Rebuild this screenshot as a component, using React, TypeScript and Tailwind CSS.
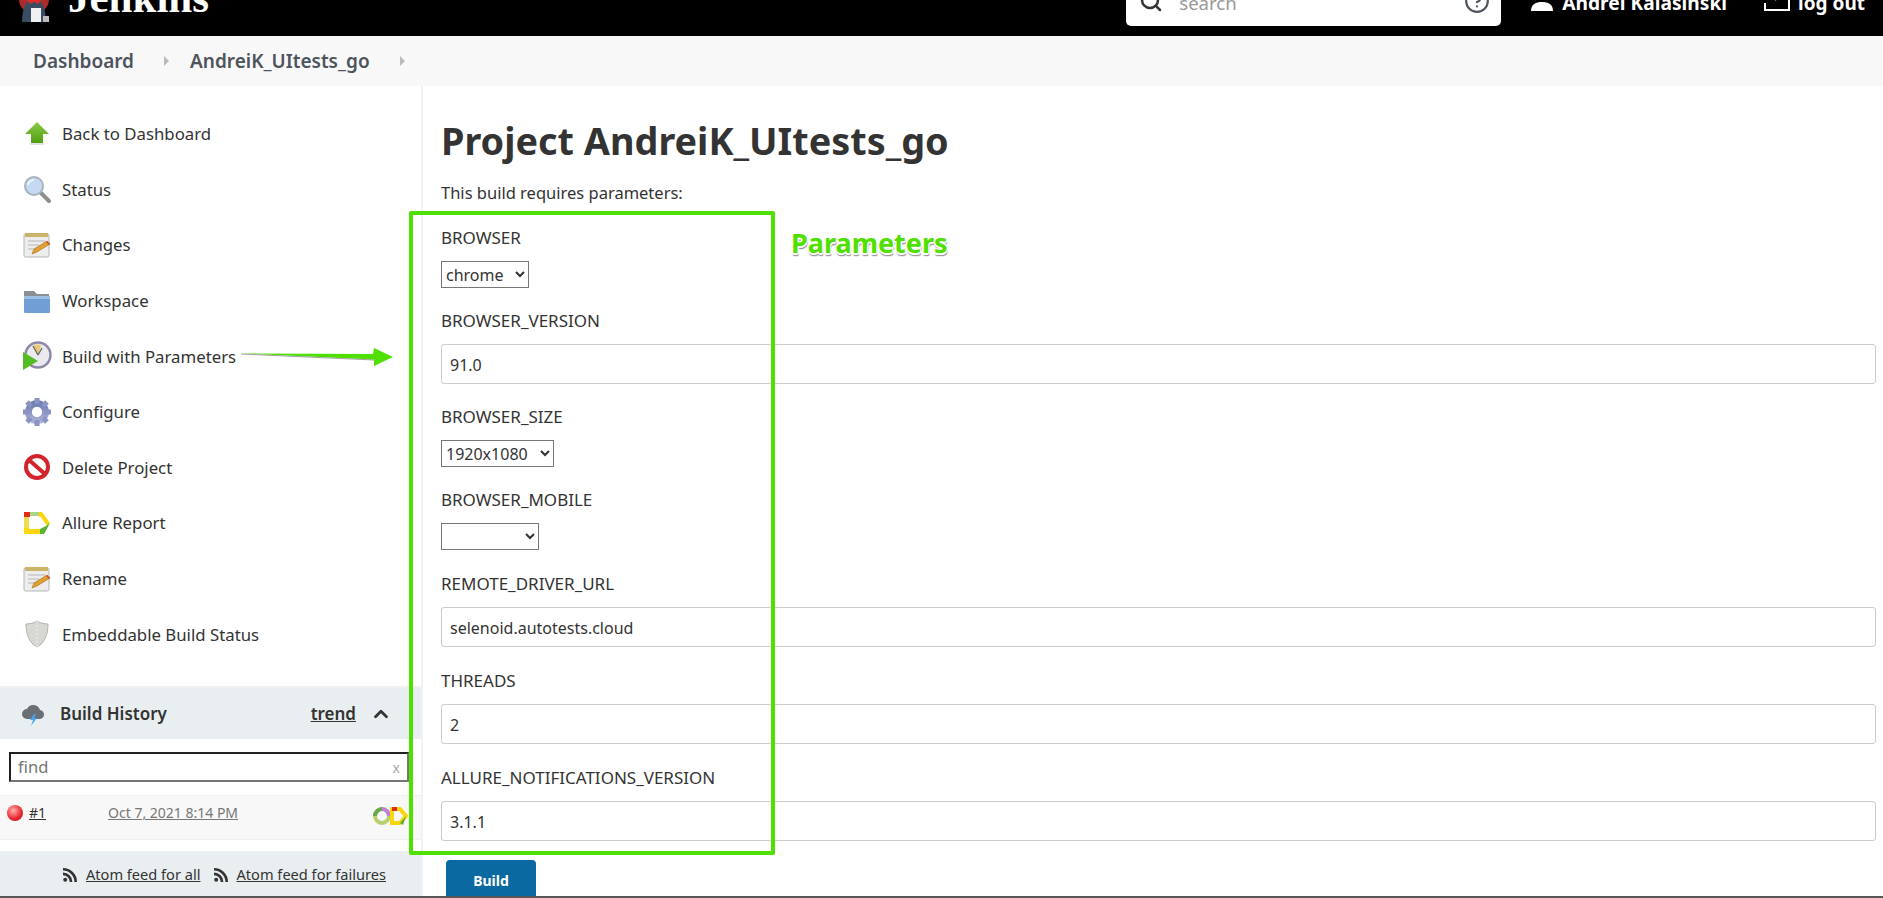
import { ChevronUp, CircleHelp, Search } from 'lucide-react';
import type { ReactNode } from 'react';

const font = { fontFamily: '"Noto Sans", sans-serif' };

function Notepad() {
  return (
    <svg viewBox="0 0 28 28" className="w-[28px] h-[28px]">
      <rect x="1" y="3" width="25" height="23" rx="1.5" fill="#ededed" stroke="#b5b5b5" />
      <rect x="2" y="2" width="23" height="4" fill="#c9b469" />
      <path d="M5 10h17M5 14h11M5 18h8" stroke="#b8b8b8" strokeWidth="1.2" />
      <path d="M9 23l2-5L24 10l3 3-13 8z" fill="#e0a030" stroke="#a86a18" strokeWidth="0.6" />
      <path d="M23 11l3 3 1-1-3-3z" fill="#d04a3a" />
    </svg>
  );
}

function Allure() {
  return (
    <svg viewBox="0 0 28 28" className="w-[28px] h-[28px]">
      <path d="M1 3h6v5H1z" fill="#e02a1c" />
      <path d="M7 3h9v4H7z" fill="#a8d48a" />
      <path d="M16 3h3l8 11-3 3-6-9h-2z" fill="#fbd60a" />
      <path d="M1 8h5v11H1z" fill="#f0dc50" />
      <path d="M1 19h5v4H1z" fill="#fbd60a" />
      <path d="M6 20h11v5H1v-2h5z" fill="#fbd60a" />
      <path d="M17 20l6-3 4-3-6 11h-4z" fill="#5cb030" />
    </svg>
  );
}

function AtomIcon() {
  return (
    <svg viewBox="0 0 14 14" className="w-[14px] h-[14px] shrink-0" fill="#333">
      <circle cx="2.2" cy="11.8" r="2" />
      <path d="M0 4.6v2.6a6.8 6.8 0 0 1 6.8 6.8h2.6A9.4 9.4 0 0 0 0 4.6z" />
      <path d="M0 0v2.6A11.4 11.4 0 0 1 11.4 14H14A14 14 0 0 0 0 0z" />
    </svg>
  );
}

const sideItems: { label: string; icon: ReactNode }[] = [
  {
    label: 'Back to Dashboard',
    icon: (
      <svg viewBox="0 0 28 28" className="w-[28px] h-[28px]">
        <defs>
          <linearGradient id="upArrow" x1="0" y1="0" x2="0" y2="1">
            <stop offset="0" stopColor="#8ccc48" />
            <stop offset="1" stopColor="#4e9e12" />
          </linearGradient>
        </defs>
        <path d="M14 2L26 14h-6v9H8v-9H2z" fill="url(#upArrow)" />
        <rect x="7" y="23" width="14" height="2" fill="#e3e3e3" />
      </svg>
    ),
  },
  {
    label: 'Status',
    icon: (
      <svg viewBox="0 0 28 28" className="w-[28px] h-[28px]">
        <path d="M18 18l8 8" stroke="#8f8f8f" strokeWidth="4" strokeLinecap="round" />
        <circle cx="11" cy="11" r="9" fill="#c5daf2" stroke="#a9b3bd" strokeWidth="2" />
        <path d="M5 10a6 6 0 0 1 6-5" stroke="#eef5fc" strokeWidth="2" fill="none" />
      </svg>
    ),
  },
  { label: 'Changes', icon: <Notepad /> },
  {
    label: 'Workspace',
    icon: (
      <svg viewBox="0 0 28 28" className="w-[28px] h-[28px]">
        <path d="M1 4h10l3 3h12v4H1z" fill="#8a8f96" />
        <rect x="1" y="9" width="26" height="17" rx="1" fill="#6f9fd4" />
        <rect x="1" y="9" width="26" height="3" fill="#9cbfe4" />
      </svg>
    ),
  },
  {
    label: 'Build with Parameters',
    icon: (
      <svg viewBox="0 0 30 30" className="w-[30px] h-[30px]">
        <circle cx="16" cy="14" r="12.5" fill="#e9e9ee" stroke="#8d88a8" strokeWidth="2.5" />
        <path d="M16 14L11 5a10 10 0 0 1 8-1z" fill="#e8c870" />
        <path d="M16 14l4-7M16 14l-5-9" stroke="#666" strokeWidth="1.3" />
        <path d="M1 11l15 9-15 9z" fill="#55bb22" />
      </svg>
    ),
  },
  {
    label: 'Configure',
    icon: (
      <svg viewBox="0 0 30 30" className="w-[30px] h-[30px]">
        <defs>
          <linearGradient id="gearFill" x1="0" y1="0" x2="0" y2="1">
            <stop offset="0" stopColor="#6f7db5" />
            <stop offset="1" stopColor="#a9aed4" />
          </linearGradient>
        </defs>
        <circle cx="15" cy="15" r="8.5" fill="none" stroke="url(#gearFill)" strokeWidth="7" />
        <path
          d="M15 1v6M15 23v6M1 15h6M23 15h6M5 5l4 4M21 21l4 4M25 5l-4 4M9 21l-4 4"
          stroke="#8a93c2"
          strokeWidth="5"
        />
        <circle cx="15" cy="15" r="5" fill="#fff" />
      </svg>
    ),
  },
  {
    label: 'Delete Project',
    icon: (
      <svg viewBox="0 0 28 28" className="w-[28px] h-[28px]">
        <circle cx="14" cy="14" r="11" fill="#fff" stroke="#d3232c" strokeWidth="4" />
        <path d="M6 7l16 14" stroke="#d3232c" strokeWidth="4" />
      </svg>
    ),
  },
  { label: 'Allure Report', icon: <Allure /> },
  { label: 'Rename', icon: <Notepad /> },
  {
    label: 'Embeddable Build Status',
    icon: (
      <svg viewBox="0 0 28 28" className="w-[28px] h-[28px]">
        <path d="M14 1c3 2 7 3 11 3 0 10-3 19-11 23C6 23 3 14 3 4c4 0 8-1 11-3z" fill="#d7d7d3" stroke="#b3b3ae" />
        <path d="M14 1v26" stroke="#f0f0ee" strokeDasharray="2 2" />
      </svg>
    ),
  },
];

function Label({ children }: { children: ReactNode }) {
  return <div className="text-[17px] leading-[22px] text-[#333]">{children}</div>;
}

function TextParam({ label, value, mt }: { label: string; value: string; mt: string }) {
  return (
    <div className={mt}>
      <Label>{label}</Label>
      <input
        readOnly
        defaultValue={value}
        className="mt-[12px] block w-full h-[40px] px-[8px] pt-[2px] text-[16px] text-[#333] bg-white border border-[#ccc] rounded-[3px] outline-none"
      />
    </div>
  );
}

function SelectParam({ label, options, width, mt }: { label: string; options: string[]; width: string; mt: string }) {
  return (
    <div className={mt}>
      <Label>{label}</Label>
      <select className={`mt-[12px] block h-[27px] text-[16px] text-[#333] bg-white border border-[#767676] ${width}`} style={font}>
        {options.map(o => (
          <option key={o}>{o}</option>
        ))}
      </select>
    </div>
  );
}

export default function App() {
  return (
    <div className="relative h-[898px] w-full overflow-hidden bg-white text-[#333]" style={font}>
      {/* Header, scrolled so its top is cut off */}
      <header className="h-[36px] bg-black flex items-end overflow-hidden text-white">
        <svg viewBox="0 0 36 36" className="ml-[17px] mb-[12px] w-[36px] h-[36px] shrink-0">
          <circle cx="17" cy="11" r="15" fill="#b02a2a" />
          <path d="M5 34c0-14 5-24 12-24s12 10 12 24z" fill="#3b4d63" />
          <path d="M10 12h14l-3 4-4-2-4 2z" fill="#e02a2a" />
          <rect x="14" y="20" width="10" height="14" fill="#f0f0f0" />
          <rect x="26" y="28" width="6" height="6" fill="#bbb" />
        </svg>
        <span
          className="ml-[15px] mb-[20px] text-[43px] leading-[36px] font-bold"
          style={{ fontFamily: '"Liberation Serif", serif' }}
        >
          Jenkins
        </span>
        <div className="ml-auto flex items-end">
          <div className="w-[375px] h-[46px] bg-white rounded-b-[5px] mb-[10px] flex items-center pl-[13px] pr-[11px] text-[#999] shrink-0">
            <Search className="w-[24px] h-[24px] text-[#333] mb-[4px]" strokeWidth={2.5} />
            <span className="ml-[16px] text-[18.6px] leading-[24px]">search</span>
            <CircleHelp className="ml-auto w-[26px] h-[26px] text-[#4d545d] mb-[4px]" />
          </div>
          <svg viewBox="0 0 22 22" className="ml-[30px] mb-[25px] w-[22px] h-[22px]" fill="#fff">
            <circle cx="11" cy="5" r="5" />
            <path d="M0 22c0-7 5-9 11-9s11 2 11 9z" />
          </svg>
          <span className="ml-[9px] mb-[21px] text-[19.2px] leading-[24px] font-bold whitespace-nowrap">Andrei Kalasinski</span>
          <svg viewBox="0 0 28 28" className="ml-[36px] mb-[23px] w-[28px] h-[28px]" fill="none" stroke="#fff" strokeWidth="2">
            <path d="M2 8h12M26 2v23H2v-7M2 11h14M12 7l4 4-4 4" />
          </svg>
          <span className="ml-[7px] mr-[18px] mb-[21px] text-[19px] leading-[24px] font-bold whitespace-nowrap">log out</span>
        </div>
      </header>

      {/* Breadcrumb */}
      <nav className="h-[50px] bg-[#f8f8f8] flex items-center pl-[33px] text-[19px] font-semibold text-[#4d545d]">
        <span>Dashboard</span>
        <span className="ml-[30px] w-0 h-0 border-y-[5px] border-y-transparent border-l-[5px] border-l-[#bbb]" />
        <span className="ml-[21px]">AndreiK_UItests_go</span>
        <span className="ml-[30px] w-0 h-0 border-y-[5px] border-y-transparent border-l-[5px] border-l-[#bbb]" />
      </nav>

      <div className="flex h-[812px]">
        {/* Side panel */}
        <aside className="w-[423px] shrink-0 flex flex-col border-r-2 border-[#f2f2f2]">
          <div className="pt-[20px] h-[600px] shrink-0">
            {sideItems.map(item => (
              <div key={item.label} className="h-[55.6px] flex items-center text-[16.8px] text-[#333]">
                <div className="w-[62px] flex justify-center pl-[11px] shrink-0">{item.icon}</div>
                <span>{item.label}</span>
              </div>
            ))}
          </div>
          <div className="border-t-2 border-[#f0f0f0] h-[53px] bg-[#e9eef1] flex items-center pl-[21px] pr-[29px]">
            <svg viewBox="0 0 24 24" className="w-[24px] h-[24px]">
              <path d="M6 17a5 5 0 0 1 0-10 7 7 0 0 1 13 1 4.5 4.5 0 0 1-1 9z" fill="#6a6f75" />
              <path d="M13 12l-4 6h3l-2 6 6-8h-3l2-4z" fill="#4aa8e8" />
            </svg>
            <span className="ml-[15px] text-[17px] font-semibold">Build History</span>
            <span className="ml-auto text-[17px] font-semibold underline">trend</span>
            <ChevronUp className="ml-[14px] w-[22px] h-[22px]" strokeWidth={3} />
          </div>
          <div className="px-[9px] pt-[13px]">
            <div className="h-[30px] w-[400px] border-2 border-[#222] border-b-[#767676] border-r-[#767676] flex items-center justify-between pl-[7px] pr-[7px] bg-white text-[16.5px] text-[#757575]">
              <span>find</span>
              <span className="text-[14px] text-[#aaa]">x</span>
            </div>
          </div>
          <div className="mt-[13px] h-[45px] bg-[#f8f8f8] border-y border-[#f0f0f0] flex items-start pt-[6px] pl-[7px] relative">
            <span className="w-[16px] h-[16px] rounded-full bg-[radial-gradient(circle_at_40%_35%,#ffb0b0,#e8222a_60%,#b01018)] mt-[3px]" />
            <span className="ml-[6px] text-[14px] underline">#1</span>
            <span className="ml-[62px] text-[14px] underline text-[#777]">Oct 7, 2021 8:14 PM</span>
            <svg viewBox="0 0 36 20" className="absolute left-[373px] top-[10px] w-[36px] h-[20px]">
              <circle cx="9" cy="10" r="7" fill="none" stroke="#b8d070" strokeWidth="4" />
              <path d="M2 10a7 7 0 0 1 7-7" fill="none" stroke="#6aa84f" strokeWidth="4" />
              <path d="M9 3a7 7 0 0 1 7 7" fill="none" stroke="#c080d8" strokeWidth="4" />
              <path d="M19 3h8l6 7-6 7h-8z" fill="none" stroke="#fbd60a" strokeWidth="4" />
              <path d="M19 1h5v4h-5z" fill="#e02a1c" />
              <path d="M27 17l6-7-3 9z" fill="#5cb030" />
            </svg>
          </div>
          <div className="mt-[11px] flex-1 bg-[#e9eef1] flex items-center justify-end pr-[35px] text-[14.6px] text-[#333]">
            <AtomIcon />
            <span className="ml-[9px] underline">Atom feed for all</span>
            <span className="ml-[13px]">
              <AtomIcon />
            </span>
            <span className="ml-[9px] underline">Atom feed for failures</span>
          </div>
        </aside>

        {/* Main */}
        <main className="flex-1 pl-[18px] pr-[7px]">
          <h1 className="mt-[30px] text-[37.8px] leading-[50px] font-bold text-[#333]">Project AndreiK_UItests_go</h1>
          <p className="mt-[15px] text-[16.5px] leading-[24px]">This build requires parameters:</p>
          <SelectParam label="BROWSER" options={['chrome']} width="w-[88px]" mt="mt-[22px]" />
          <TextParam label="BROWSER_VERSION" value="91.0" mt="mt-[22px]" />
          <SelectParam label="BROWSER_SIZE" options={['1920x1080']} width="w-[113px]" mt="mt-[22px]" />
          <SelectParam label="BROWSER_MOBILE" options={['']} width="w-[98px]" mt="mt-[22px]" />
          <TextParam label="REMOTE_DRIVER_URL" value="selenoid.autotests.cloud" mt="mt-[23px]" />
          <TextParam label="THREADS" value="2" mt="mt-[23px]" />
          <TextParam label="ALLURE_NOTIFICATIONS_VERSION" value="3.1.1" mt="mt-[23px]" />
          <button className="mt-[19px] ml-[5px] w-[90px] h-[41px] bg-[#0a69a0] rounded-t-[4px] text-white text-[14px] font-bold">Build</button>
        </main>
      </div>

      {/* Annotations drawn over the screenshot */}
      <div className="absolute left-[409px] top-[211px] w-[366px] h-[644px] border-[4px] border-[#4fe000] rounded-[2px]" />
      <div
        className="absolute left-[791px] top-[224px] text-[27px] leading-[38px] font-bold text-[#4fe000]"
        style={{ textShadow: '-1px -1px 0 #fff, 1px -1px 0 #fff, -1px 1px 0 #fff, 1px 1px 0 #fff, 0 2px 0 #fff, 1px 3px 1px #999, 0 3px 1px #999' }}
      >
        Parameters
      </div>
      <svg viewBox="0 0 152 20" className="absolute left-[241px] top-[347px] w-[152px] h-[20px]">
        <path d="M0 6.5L132 7 133 1 152 10 133 19 133 12.5z" fill="#4fe000" />
        <path d="M0 7L133 13" stroke="#888" strokeWidth="0.8" />
      </svg>
      <div className="absolute left-0 right-0 bottom-0 h-[2px] bg-[#555]" />
    </div>
  );
}
